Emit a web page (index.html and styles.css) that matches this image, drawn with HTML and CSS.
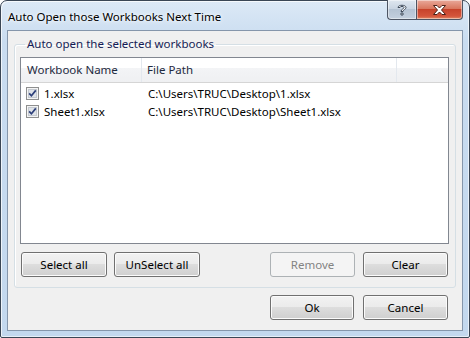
FILE: index.html
```html
<!DOCTYPE html>
<html lang="en">
<head>
  <meta charset="UTF-8" />
  <title>Auto Open those Workbooks Next Time</title>
  <link rel="stylesheet" href="styles.css">
</head>
<body>
  <div class="window">
    <div class="titlebar">
      <span class="title">Auto Open those Workbooks Next Time</span>
      <div class="caption-buttons">
        <div class="cap-btn help-btn">
          <svg width="12" height="14" viewBox="0 0 12 14">
            <path d="M2 4.5 C2 1.5 10 1.5 10 4.5 C10 6.5 7 6.5 7 8.5 L5 8.5 C5 6 8 6 8 4.5 C8 3 4 3 4 4.5 Z M5 10 L7 10 L7 12 L5 12 Z" fill="#fff" stroke="#3d4a5a" stroke-width="1" stroke-linejoin="round"/>
          </svg>
        </div>
        <div class="cap-btn close-btn">
          <svg width="15" height="12" viewBox="0 0 15 12">
            <path d="M1.5 1.5 L5 1.5 L7.5 4 L10 1.5 L13.5 1.5 L9.5 6 L13.5 10.5 L10 10.5 L7.5 8 L5 10.5 L1.5 10.5 L5.5 6 Z" fill="#fff" stroke="#4a2018" stroke-width="1" stroke-linejoin="round"/>
          </svg>
        </div>
      </div>
    </div>

    <div class="client">
      <fieldset class="group">
        <legend>Auto open the selected workbooks</legend>

        <div class="listview">
          <div class="lv-header">
            <div class="lv-col col-name">Workbook Name</div>
            <div class="lv-col col-path">File Path</div>
            <div class="lv-col col-rest"></div>
          </div>
          <div class="lv-body" id="lvBody"></div>
        </div>

        <div class="group-buttons">
          <button type="button" class="btn">Select all</button>
          <button type="button" class="btn">UnSelect all</button>
          <span class="spacer"></span>
          <button type="button" class="btn btn-narrow" disabled>Remove</button>
          <button type="button" class="btn btn-narrow">Clear</button>
        </div>
      </fieldset>

      <div class="dialog-buttons">
        <button type="button" class="btn btn-ok">Ok</button>
        <button type="button" class="btn btn-cancel">Cancel</button>
      </div>
    </div>
  </div>

  <script>
    const workbooks = [
      { name: '1.xlsx', path: 'C:\\Users\\TRUC\\Desktop\\1.xlsx' },
      { name: 'Sheet1.xlsx', path: 'C:\\Users\\TRUC\\Desktop\\Sheet1.xlsx' }
    ];

    const body = document.getElementById('lvBody');
    const check = '<svg width="13" height="13" viewBox="0 0 13 13">' +
      '<rect x="0.5" y="0.5" width="12" height="12" fill="#f4f4f4" stroke="#8e8f8f"/>' +
      '<rect x="2.5" y="2.5" width="8" height="8" fill="#dfe3e8" stroke="#c4c9d0"/>' +
      '<path d="M3.2 6.4 L5.4 8.8 L9.8 3.4" fill="none" stroke="#2c3f7a" stroke-width="1.7"/>' +
      '</svg>';

    workbooks.forEach(wb => {
      const row = document.createElement('div');
      row.className = 'lv-row';
      row.innerHTML = `<div class="lv-cell col-name"><span class="checkbox">${check}</span>${wb.name}</div>` +
        `<div class="lv-cell col-path">${wb.path}</div>`;
      body.appendChild(row);
    });
  </script>
</body>
</html>
```

FILE: styles.css
```css
body {
  margin: 0;
  font-family: "Noto Sans", "Open Sans", sans-serif;
  font-size: 11.5px;
  color: #000;
  background: #fff;
}

.window {
  width: 470px;
  height: 338px;
  box-sizing: border-box;
  border: 1px solid #3a4655;
  border-radius: 7px 7px 2px 2px;
  background: linear-gradient(180deg, #dce9f6 0%, #c9dcf0 12%, #c3d8ee 100%);
  box-shadow: inset 1px 1px 0 rgba(255,255,255,0.7), inset -1px -1px 0 rgba(255,255,255,0.6);
  padding: 0 6px 6px;
  display: flex;
  flex-direction: column;
}

.titlebar {
  height: 29px;
  display: flex;
  align-items: flex-start;
  justify-content: space-between;
  flex-shrink: 0;
}

.title {
  margin: 9px 0 0 1px;
  line-height: 14px;
  text-shadow: 0 0 6px #fff, 0 0 3px #fff;
}

.caption-buttons {
  display: flex;
  margin-top: -1px;
}

.cap-btn {
  height: 20px;
  box-sizing: border-box;
  border: 1px solid #4d5563;
  border-top: none;
  display: flex;
  align-items: center;
  justify-content: center;
  box-shadow: inset 0 0 0 1px rgba(255,255,255,0.45);
}

.help-btn {
  width: 29px;
  border-right: none;
  border-radius: 0 0 0 4px;
  background: linear-gradient(180deg, #dfe7ef 0%, #c9d5e2 45%, #b5c3d3 50%, #c3d0de 100%);
}

.close-btn {
  width: 47px;
  border-radius: 0 0 4px 0;
  background: linear-gradient(180deg, #e9a99b 0%, #d9775f 45%, #c7432b 50%, #d4553b 85%, #e08a66 100%);
}

.client {
  flex: 1;
  border: 1px solid #8596ab;
  background: #f0f0f0;
  display: flex;
  flex-direction: column;
}

.group {
  margin: 5px 6px 0;
  padding: 5px 6px 10px 5px;
  border: 1px solid #d5dfe5;
  border-radius: 3px;
  box-shadow: inset 1px 1px 0 #fff;
  min-width: 0;
}

.group legend {
  padding: 0 2px;
  margin-left: 5px;
  line-height: 16px;
  color: #151c55;
}

.listview {
  height: 187px;
  box-sizing: border-box;
  border: 1px solid #828790;
  background: #fff;
}

.lv-header {
  display: flex;
  height: 25px;
  box-sizing: border-box;
  border-bottom: 1px solid #d5d5d5;
  background: linear-gradient(180deg, #fff 0%, #fff 40%, #f3f4f6 41%, #eff0f2 100%);
}

.lv-col {
  box-sizing: border-box;
  border-right: 1px solid #e3e8ee;
  line-height: 24px;
  padding-left: 6px;
  color: #1e2a3e;
  white-space: nowrap;
}

.col-name {
  width: 121px;
}

.col-path {
  width: 255px;
}

.lv-col.col-rest {
  width: 50px;
  border-right: none;
}

.lv-header .col-path {
  padding-left: 5px;
}

.lv-body {
  padding-top: 1px;
}

.lv-row {
  display: flex;
  height: 18px;
  align-items: center;
}

.lv-cell {
  white-space: nowrap;
  box-sizing: border-box;
}

.lv-row .col-name {
  display: flex;
  align-items: center;
  padding-left: 5px;
}

.lv-row .col-path {
  padding-left: 6px;
}

.checkbox {
  display: flex;
  width: 13px;
  height: 13px;
  margin-right: 5px;
}

.group-buttons {
  display: flex;
  margin-top: 8px;
  padding: 0 1px;
  gap: 7px;
}

.spacer {
  flex: 1;
}

.btn {
  width: 86px;
  height: 25px;
  box-sizing: border-box;
  border: 1px solid #707070;
  border-radius: 3px;
  background: linear-gradient(180deg, #f2f2f2 0%, #ebebeb 48%, #dddddd 50%, #cfcfcf 100%);
  box-shadow: inset 0 0 0 1px #fbfbfb;
  font-family: inherit;
  font-size: 11.5px;
  color: #000;
  padding: 0;
}

.btn-narrow {
  width: 85px;
}

.group-buttons .btn-narrow + .btn-narrow {
  margin-left: 1px;
}

.btn:disabled {
  border-color: #adb2b5;
  background: #f4f4f4;
  box-shadow: none;
  color: #838383;
}

.dialog-buttons {
  display: flex;
  justify-content: flex-end;
  gap: 9px;
  margin: 7px 14px 0 0;
}

.btn-ok {
  width: 84px;
}

.btn-cancel {
  width: 85px;
}
```
